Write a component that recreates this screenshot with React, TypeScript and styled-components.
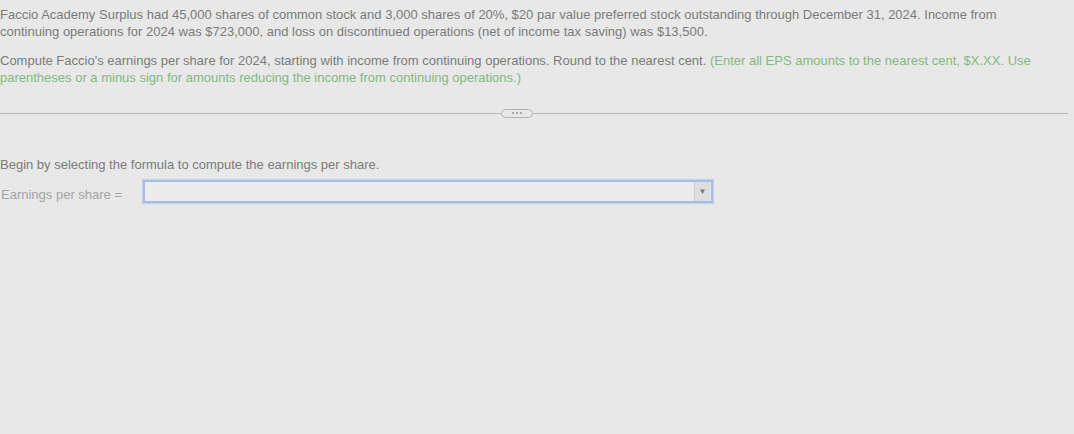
import React from "react";
import styled, { createGlobalStyle } from "styled-components";

const GlobalStyle = createGlobalStyle`
  html, body {
    margin: 0;
    padding: 0;
    background: #e8e8e8;
  }
  body {
    font-family: "Liberation Sans", Arial, sans-serif;
    font-size: 13px;
    color: #7b7b7b;
  }
`;

const Page = styled.div`
  width: 1068px;
  min-height: 434px;
  padding-top: 6px;
  box-sizing: border-box;
`;

const Paragraph = styled.p`
  max-width: 1040px;
  margin: 0 0 12px 0;
  line-height: 17px;
`;

const Hint = styled.span`
  color: #83b883;
`;

const Divider = styled.div`
  position: relative;
  display: flex;
  align-items: center;
  justify-content: center;
  height: 10px;
  padding-right: 34px;
  margin: 22px 0 38px 0;
  &::before {
    content: "";
    position: absolute;
    left: 0;
    right: 0;
    top: 5px;
    height: 1px;
    background: #b9b9b9;
  }
`;

const Handle = styled.button`
  position: relative;
  width: 32px;
  height: 9px;
  padding: 0;
  border: 1px solid #b3b3b3;
  border-radius: 5px;
  background: #e8e8e8;
  display: flex;
  align-items: center;
  justify-content: center;
  gap: 2px;
`;

const Dot = styled.span`
  width: 2px;
  height: 2px;
  background: #a8a8a8;
`;

const Intro = styled.p`
  margin: 0 0 7px 0;
  line-height: 17px;
`;

const FormulaRow = styled.div`
  display: flex;
  align-items: flex-start;
`;

const Label = styled.label`
  width: 143px;
  padding: 6px 0 0 1px;
  line-height: 17px;
  box-sizing: border-box;
  color: #a4a4a4;
`;

const SelectBox = styled.div`
  width: 570px;
  height: 23px;
  box-sizing: border-box;
  border: 2px solid #a9bce2;
  box-shadow: 0 0 1px 1px #c5d2ea;
  background: #ececec;
  display: flex;
  justify-content: flex-end;
  align-items: center;
  padding-right: 1px;
`;

const Arrow = styled.div`
  width: 15px;
  height: 19px;
  background: #dedede;
  border-left: 1px solid #d2d2d2;
  display: flex;
  align-items: center;
  justify-content: center;
  font-size: 8px;
  color: #7a7a7a;
`;

export default function App() {
  return (
    <Page>
      <GlobalStyle />
      <Paragraph>
        Faccio Academy Surplus had 45,000 shares of common stock and 3,000 shares of 20%, $20 par value
        preferred stock outstanding through December 31, 2024. Income from continuing operations for 2024 was
        $723,000, and loss on discontinued operations (net of income tax saving) was $13,500.
      </Paragraph>
      <Paragraph>
        Compute Faccio's earnings per share for 2024, starting with income from continuing operations. Round to
        the nearest cent.{" "}
        <Hint>
          (Enter all EPS amounts to the nearest cent, $X.XX. Use parentheses or a minus sign for amounts
          reducing the income from continuing operations.)
        </Hint>
      </Paragraph>
      <Divider>
        <Handle>
          <Dot />
          <Dot />
          <Dot />
        </Handle>
      </Divider>
      <Intro>Begin by selecting the formula to compute the earnings per share.</Intro>
      <FormulaRow>
        <Label>Earnings per share =</Label>
        <SelectBox>
          <Arrow>▼</Arrow>
        </SelectBox>
      </FormulaRow>
    </Page>
  );
}
